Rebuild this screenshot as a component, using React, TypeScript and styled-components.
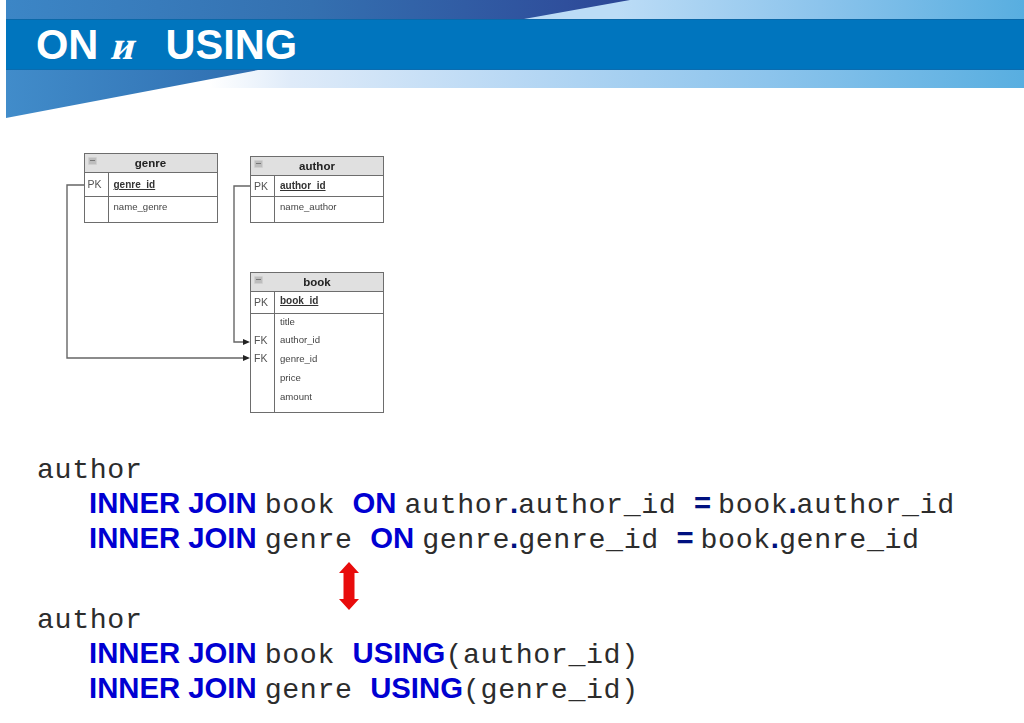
import React from "react";
import styled, { createGlobalStyle } from "styled-components";

const Global = createGlobalStyle`
  html, body { margin: 0; padding: 0; background: #fff; }
  #root { width: 1024px; height: 723px; overflow: hidden; }
`;

const Slide = styled.div`
  width: 1024px;
  height: 723px;
  display: flex;
  flex-direction: column;
  background: #fff;
  overflow: hidden;
`;

const Header = styled.header`
  margin-left: 6px;
  display: flex;
  flex-direction: column;
  height: 88px;
  flex: none;
`;

const TopBand = styled.div`
  position: relative;
  height: 19px;
  background: linear-gradient(90deg, #bcdcf6 0%, #bcdcf6 60%, #8cc4ec 80%, #58aee0 100%);
  &::before {
    content: "";
    position: absolute;
    inset: 0;
    background: linear-gradient(90deg, #3c86c6 0%, #3470b0 30%, #2f4f9c 55%, #2a4494 62%);
    clip-path: polygon(0 0, 624px 0, 518px 100%, 0 100%);
  }
`;

const TitleBar = styled.div`
  height: 51px;
  background: #0075be;
  display: flex;
  align-items: center;
  padding-left: 30px;
  border-top: 1px solid #0a68a8;
  border-bottom: 1px solid #0a6cb0;
  box-sizing: border-box;
`;

const Title = styled.h1`
  margin: 0;
  display: flex;
  align-items: baseline;
  font: bold 41.6px/1 "Liberation Sans", Arial, sans-serif;
  color: #fff;
`;

const TitleConj = styled.span`
  font: bold 40px/1 "Liberation Serif", serif;
  transform: skewX(-14deg);
  margin: 0 29px 0 15px;
`;

const BottomBand = styled.div`
  position: relative;
  height: 18px;
  background: linear-gradient(90deg, #fff 0%, #fff 20%, #dfebf9 28%, #b8d8f4 50%, #8cc4ec 75%, #58aee0 100%);
  &::before {
    content: "";
    position: absolute;
    left: 0;
    top: 0;
    width: 252px;
    height: 48px;
    background: linear-gradient(90deg, #418cca 0%, #2f6eb0 100%);
    clip-path: polygon(0 0, 100% 0, 0 100%);
  }
`;

const Canvas = styled.section`
  position: relative;
  height: 362px;
  flex: none;
  filter: blur(0.45px);
`;

const Wires = styled.svg`
  position: absolute;
  left: 0;
  top: 0;
`;

const Table = styled.div<{ $x: number; $y: number }>`
  position: absolute;
  left: ${(p) => p.$x}px;
  top: ${(p) => p.$y - 88}px;
  width: 134px;
  box-sizing: border-box;
  border: 1.5px solid #6d6d6d;
  background: #fff;
  font-family: "Liberation Sans", Arial, sans-serif;
  color: #444;
`;

const TableHead = styled.div`
  position: relative;
  height: 18px;
  background: #e0e0e0;
  border-bottom: 1.5px solid #6d6d6d;
  display: flex;
  align-items: center;
  justify-content: center;
  font-weight: bold;
  font-size: 11.5px;
  color: #222;
`;

const Collapse = styled.span`
  position: absolute;
  left: 3px;
  top: 3px;
  width: 7px;
  height: 6px;
  border-radius: 1px;
  background: #bdbdbd;
  border: 1px solid #cfcfcf;
  &::after {
    content: "";
    position: absolute;
    left: 1px;
    right: 1px;
    top: 2px;
    height: 1px;
    background: #777;
  }
`;

const Section = styled.div<{ $h: number; $line?: boolean }>`
  display: grid;
  grid-template-columns: 24px 1fr;
  height: ${(p) => p.$h}px;
  box-sizing: border-box;
  border-bottom: ${(p) => (p.$line ? "1.5px solid #6d6d6d" : "none")};
`;

const KeyCol = styled.div<{ $top: number }>`
  border-right: 1.5px solid #6d6d6d;
  font-size: 10.5px;
  line-height: 18.5px;
  padding: ${(p) => p.$top}px 0 0 3px;
  color: #555;
`;

const FieldCol = styled.div<{ $top: number }>`
  margin-top: ${(p) => p.$top}px;
  padding-left: 5px;
  font-size: 9.6px;
  line-height: 18.8px;
`;

const KeyField = styled.span`
  font-weight: bold;
  color: #333;
  text-decoration: underline;
  font-size: 10px;
`;

const Code = styled.section`
  position: relative;
  padding-left: 37px;
  font: 28.3px/35px "Liberation Mono", "Courier New", monospace;
  letter-spacing: 0.6px;
  color: #2c2c2c;
`;

const Line = styled.div<{ $indent?: boolean; $gap?: number }>`
  white-space: pre;
  height: 35px;
  display: flex;
  align-items: baseline;
  padding-left: ${(p) => (p.$indent ? 52 : 0)}px;
  margin-top: ${(p) => p.$gap ?? 0}px;
  &::before {
    content: "\\200b";
    font: bold 29.3px/35px "Liberation Sans", Arial, sans-serif;
  }
`;

const Kw = styled.span<{ $r?: number }>`
  font: bold 29.3px/35px "Liberation Sans", Arial, sans-serif;
  letter-spacing: 0;
  color: #0000d2;
  margin-right: ${(p) => p.$r ?? 0}px;
`;

const Op = styled.span<{ $r?: number }>`
  font: bold 29.3px/35px "Liberation Sans", Arial, sans-serif;
  letter-spacing: 0;
  color: #00107f;
  margin-right: ${(p) => p.$r ?? 0}px;
`;

const Swap = styled.svg`
  position: absolute;
  left: 339px;
  top: 112px;
`;

function EntityTable({ x, y, name, children }: { x: number; y: number; name: string; children: React.ReactNode }) {
  return (
    <Table $x={x} $y={y}>
      <TableHead>
        <Collapse />
        {name}
      </TableHead>
      {children}
    </Table>
  );
}

export default function App() {
  return (
    <Slide>
      <Global />
      <Header>
        <TopBand />
        <TitleBar>
          <Title>
            ON<TitleConj>и</TitleConj>USING
          </Title>
        </TitleBar>
        <BottomBand />
      </Header>
      <Canvas>
        <Wires width="1024" height="362" viewBox="0 88 1024 362">
          <g fill="none" stroke="#666" strokeWidth="1.4">
            <path d="M84 185H67V358H244" />
            <path d="M250 186H234V342H244" />
          </g>
          <path d="M243 339l7 3-7 3zM243 355l7 3-7 3z" fill="#222" />
        </Wires>
        <EntityTable x={83.5} y={153} name="genre">
          <Section $h={24} $line>
            <KeyCol $top={2}>PK</KeyCol>
            <FieldCol $top={3}><KeyField>genre_id</KeyField></FieldCol>
          </Section>
          <Section $h={25}>
            <KeyCol $top={0} />
            <FieldCol $top={1}>name_genre</FieldCol>
          </Section>
        </EntityTable>
        <EntityTable x={250} y={156} name="author">
          <Section $h={21} $line>
            <KeyCol $top={1}>PK</KeyCol>
            <FieldCol $top={1}><KeyField>author_id</KeyField></FieldCol>
          </Section>
          <Section $h={25}>
            <KeyCol $top={0} />
            <FieldCol $top={1}>name_author</FieldCol>
          </Section>
        </EntityTable>
        <EntityTable x={250} y={271.5} name="book">
          <Section $h={22} $line>
            <KeyCol $top={1}>PK</KeyCol>
            <FieldCol $top={0}><KeyField>book_id</KeyField></FieldCol>
          </Section>
          <Section $h={98}>
            <KeyCol $top={17}>
              FK
              <br />
              FK
            </KeyCol>
            <FieldCol $top={-1}>
              title
              <br />
              author_id
              <br />
              genre_id
              <br />
              price
              <br />
              amount
            </FieldCol>
          </Section>
        </EntityTable>
      </Canvas>
      <Code>
        <Line>author</Line>
        <Line $indent>
          <Kw $r={8}>INNER JOIN</Kw>book <Kw $r={8}>ON</Kw>author<Op>.</Op>author_id <Op $r={7}>=</Op>book<Op>.</Op>author_id
        </Line>
        <Line $indent>
          <Kw $r={8}>INNER JOIN</Kw>genre <Kw $r={8}>ON</Kw>genre<Op>.</Op>genre_id <Op $r={7}>=</Op>book<Op>.</Op>genre_id
        </Line>
        <Line $gap={45}>author</Line>
        <Line $indent>
          <Kw $r={8}>INNER JOIN</Kw>book <Kw>USING</Kw>(author_id)
        </Line>
        <Line $indent>
          <Kw $r={8}>INNER JOIN</Kw>genre <Kw>USING</Kw>(genre_id)
        </Line>
        <Swap width="20" height="48" viewBox="0 0 20 48">
          <path d="M10 0L20 11H15.5V37H20L10 48L0 37H4.5V11H0Z" fill="#e80c0c" />
        </Swap>
      </Code>
    </Slide>
  );
}
